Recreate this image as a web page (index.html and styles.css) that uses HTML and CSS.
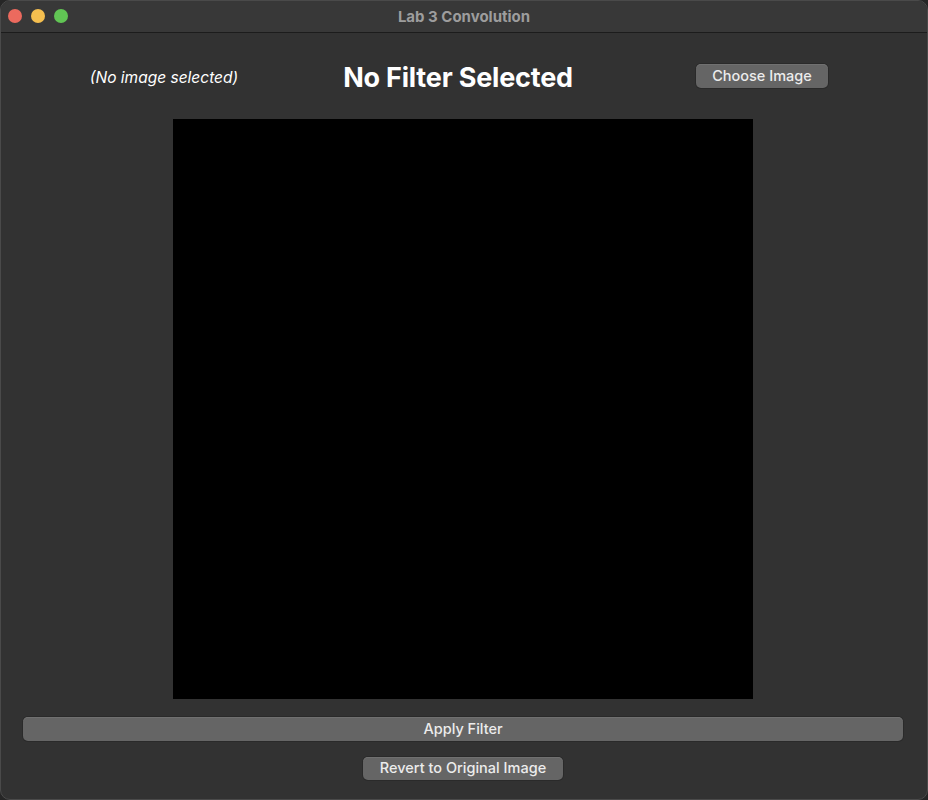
FILE: index.html
```html
<!DOCTYPE html>
<html>
<head>
<meta charset="utf-8">
<link rel="stylesheet" href="styles.css">
</head>
<body>
<div class="window">
  <div class="titlebar">
    <div class="lights">
      <span class="light red"></span>
      <span class="light yellow"></span>
      <span class="light green"></span>
    </div>
    <div class="title">Lab 3 Convolution</div>
  </div>
  <div class="content">
    <div class="header">
      <div class="status">(No image selected)</div>
      <div class="heading">No Filter Selected</div>
      <button class="btn choose">Choose Image</button>
    </div>
    <div class="canvas"></div>
    <button class="btn apply">Apply Filter</button>
    <button class="btn revert">Revert to Original Image</button>
  </div>
</div>
</body>
</html>
```
FILE: styles.css
```css
html, body {
  margin: 0;
  padding: 0;
  background: #262626;
  width: 928px;
  height: 800px;
  overflow: hidden;
}
.window {
  box-sizing: border-box;
  width: 928px;
  height: 800px;
  background: #323232;
  border-radius: 10px;
  border: 1px solid #4a4a4a;
  overflow: hidden;
  font-family: Inter, "Liberation Sans", sans-serif;
  color: #fff;
  display: flex;
  flex-direction: column;
}
.titlebar {
  height: 31px;
  background: #383838;
  border-bottom: 1px solid #1c1c1c;
  display: flex;
  align-items: center;
  position: relative;
  flex: none;
}
.lights {
  display: flex;
  gap: 9px;
  padding-left: 7px;
  margin-top: -2px;
}
.light {
  width: 14px;
  height: 14px;
  border-radius: 50%;
  display: block;
}
.red { background: #ec6a5e; }
.yellow { background: #f5bf4f; }
.green { background: #61c554; }
.title {
  position: absolute;
  left: 0;
  right: 0;
  top: 6px;
  text-align: center;
  font-size: 15px;
  font-weight: 700;
  color: #9d9d9d;
  pointer-events: none;
}
.content {
  display: flex;
  flex-direction: column;
  align-items: center;
  padding: 0 24px 0 22px;
}
.header {
  display: grid;
  grid-template-columns: 290px 294px 296px;
  width: 880px;
  align-items: center;
  height: 86px;
}
.status {
  justify-self: center;
  font-style: italic;
  font-size: 15.5px;
  margin-top: 2px;
  padding-right: 8px;
}
.heading {
  justify-self: center;
  font-size: 27px;
  font-weight: 700;
  letter-spacing: -0.2px;
  padding-right: 4px;
  margin-top: 2px;
}
.btn {
  font-family: Inter, "Liberation Sans", sans-serif;
  font-size: 14.5px;
  font-weight: 500;
  color: #ececec;
  background: #656565;
  border: none;
  border-radius: 5px;
  box-shadow: 0 0 0 1px #2a2a2a, inset 0 1px 0 #707070;
  height: 24px;
  padding: 0 0 2px;
}
.choose {
  justify-self: center;
  width: 132px;
  margin-left: 14px;
}
.canvas {
  width: 580px;
  height: 580px;
  background: #000;
}
.apply {
  margin-top: 18px;
  width: 880px;
}
.revert {
  margin-top: 16px;
  width: 200px;
  height: 23px;
}
```
